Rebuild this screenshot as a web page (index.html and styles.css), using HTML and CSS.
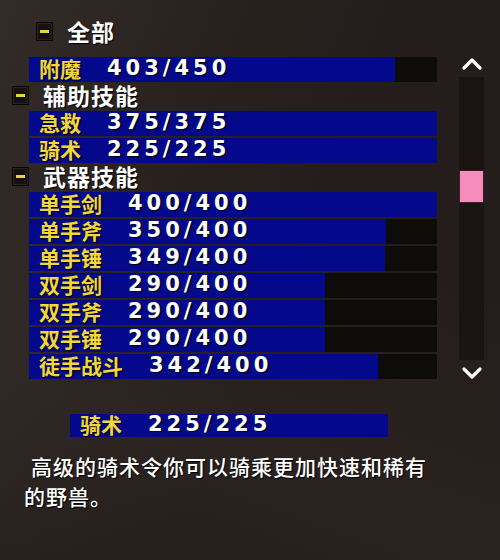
FILE: index.html
```html
<!DOCTYPE html>
<html lang="zh">
<head>
<meta charset="utf-8">
<link rel="stylesheet" href="styles.css">
</head>
<body>
<div class="screen">
  <div class="top">
    <div class="list">
      <div class="header header-all"><span class="minus"></span><span class="htext">全部</span></div>
      <div class="bar"><div class="fill" style="width:89.6%"></div><span class="label">附魔</span><span class="num">403/450</span></div>
      <div class="header"><span class="minus"></span><span class="htext">辅助技能</span></div>
      <div class="bar"><div class="fill" style="width:100%"></div><span class="label">急救</span><span class="num">375/375</span></div>
      <div class="bar"><div class="fill" style="width:100%"></div><span class="label">骑术</span><span class="num">225/225</span></div>
      <div class="header"><span class="minus"></span><span class="htext">武器技能</span></div>
      <div class="bar"><div class="fill" style="width:100%"></div><span class="label">单手剑</span><span class="num">400/400</span></div>
      <div class="bar"><div class="fill" style="width:87.5%"></div><span class="label">单手斧</span><span class="num">350/400</span></div>
      <div class="bar"><div class="fill" style="width:87.25%"></div><span class="label">单手锤</span><span class="num">349/400</span></div>
      <div class="bar"><div class="fill" style="width:72.5%"></div><span class="label">双手剑</span><span class="num">290/400</span></div>
      <div class="bar"><div class="fill" style="width:72.5%"></div><span class="label">双手斧</span><span class="num">290/400</span></div>
      <div class="bar"><div class="fill" style="width:72.5%"></div><span class="label">双手锤</span><span class="num">290/400</span></div>
      <div class="bar"><div class="fill" style="width:85.5%"></div><span class="label">徒手战斗</span><span class="num">342/400</span></div>
    </div>
    <div class="scroll">
      <svg class="chev" width="22" height="14" viewBox="0 0 22 14"><path d="M3 11 L11 3 L19 11" fill="none" stroke="#fff" stroke-width="3.2" stroke-linecap="round" stroke-linejoin="round"/></svg>
      <div class="track"><div class="thumb"></div></div>
      <svg class="chev chev-down" width="22" height="14" viewBox="0 0 22 14"><path d="M3 3 L11 11 L19 3" fill="none" stroke="#fff" stroke-width="3.2" stroke-linecap="round" stroke-linejoin="round"/></svg>
    </div>
  </div>
  <div class="detail">
    <div class="bar detail-bar"><div class="fill" style="width:100%"></div><span class="label">骑术</span><span class="num">225/225</span></div>
    <p class="desc">高级的骑术令你可以骑乘更加快速和稀有的野兽。</p>
  </div>
</div>
</body>
</html>
```
FILE: styles.css
```css
html, body {
  margin: 0;
  padding: 0;
}
body {
  width: 500px;
  height: 560px;
  overflow: hidden;
  background:
    linear-gradient(112deg, rgba(80,70,66,0.35) 0%, rgba(60,52,48,0.2) 30%, rgba(0,0,0,0) 55%),
    linear-gradient(200deg, rgba(0,0,0,0) 40%, rgba(60,52,48,0.25) 75%, rgba(0,0,0,0) 100%),
    #241d1b;
  font-family: "Noto Sans CJK SC", "DejaVu Sans", sans-serif;
}
.screen {
  display: flex;
  flex-direction: column;
  padding-top: 20px;
}
.top {
  display: flex;
  align-items: flex-start;
}
.list {
  width: 437px;
  display: flex;
  flex-direction: column;
  gap: 2px;
}
.header {
  height: 25px;
  display: flex;
  align-items: center;
  padding-left: 12px;
  padding-bottom: 2px;
  box-sizing: border-box;
}
.header-all {
  padding-left: 36px;
  margin-bottom: 10px;
}
.minus {
  width: 15px;
  height: 17px;
  background: #15110f;
  border: 1px solid #080605;
  box-shadow: inset 0 0 0 1px #2a2421;
  display: flex;
  align-items: center;
  justify-content: center;
  flex: none;
}
.minus::before {
  content: "";
  width: 9px;
  height: 3px;
  background: #e8d23a;
}
.htext {
  margin-left: 14px;
  color: #fff;
  font-weight: 700;
  font-size: 23px;
  letter-spacing: 1px;
  line-height: 1;
  text-shadow: 1px 1px 1px #000;
}
.bar {
  position: relative;
  margin-left: 29px;
  height: 25px;
  background: #0e0c0b;
  display: flex;
  align-items: center;
  padding-left: 10px;
  padding-bottom: 3px;
  box-sizing: border-box;
}
.fill {
  position: absolute;
  left: 0;
  top: 0;
  bottom: 0;
  background: #03098a;
}
.label {
  position: relative;
  color: #f2d73c;
  font-weight: 700;
  font-size: 21px;
  line-height: 1;
  margin-right: 26px;
  text-shadow: 1px 1px 1px #000;
}
.num {
  position: relative;
  color: #fff;
  font-family: "DejaVu Sans", sans-serif;
  font-weight: 700;
  font-size: 21px;
  letter-spacing: 4px;
  line-height: 1;
  text-shadow: 1px 1px 1px #000;
}
.scroll {
  margin-left: 22px;
  margin-top: 37px;
  width: 25px;
  display: flex;
  flex-direction: column;
  align-items: center;
}
.chev {
  display: block;
}
.track {
  margin-top: 6px;
  width: 25px;
  height: 283px;
  background: #191412;
  display: flex;
  flex-direction: column;
  padding-top: 93px;
  box-sizing: border-box;
}
.thumb {
  width: 23px;
  height: 31px;
  background: #f58cbc;
  border: 1px solid #3a1d28;
}
.chev-down {
  margin-top: 6px;
}
.detail {
  margin-top: 34px;
  display: flex;
  flex-direction: column;
}
.detail-bar {
  margin-left: 70px;
  width: 318px;
  height: 23px;
}
.desc {
  margin: 14px 0 0 24px;
  width: 412px;
  color: #fff;
  font-size: 21px;
  font-weight: 500;
  letter-spacing: 1px;
  line-height: 30px;
  text-indent: 7px;
  text-shadow: 1px 1px 1px #000;
}
```
